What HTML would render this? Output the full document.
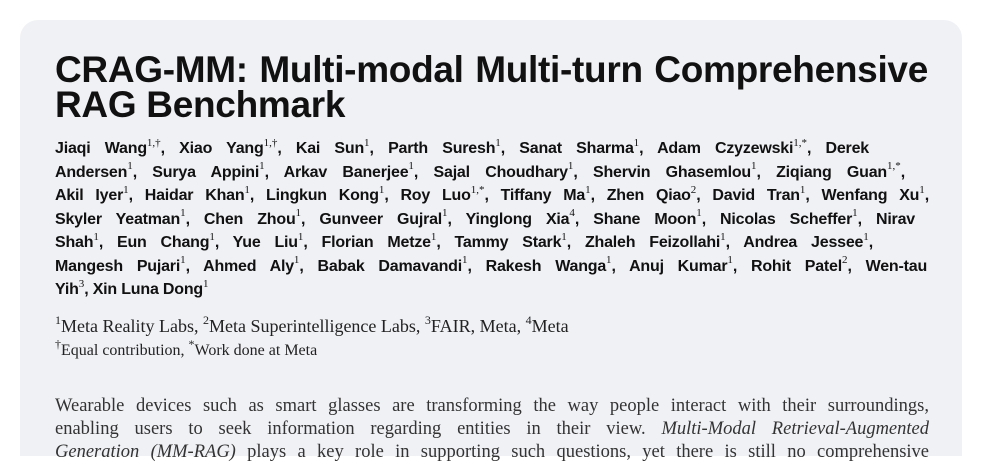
<!DOCTYPE html>
<html><head><meta charset="utf-8"><style>
html,body{margin:0;padding:0;background:#fff;width:982px;height:456px;overflow:hidden}
.card{position:absolute;left:20px;top:20px;width:942px;height:436px;background:#f0f1f5;border-radius:18px 18px 0 0}
.in{position:absolute;left:35px;top:0}
.t{font-family:"Liberation Sans",sans-serif;font-weight:bold;color:#111;font-size:37px;letter-spacing:-0.3px;line-height:35px;white-space:nowrap}
.j{display:block;text-align:justify;text-align-last:justify;white-space:nowrap}
.a{font-family:"Liberation Sans",sans-serif;font-weight:bold;color:#111;font-size:16px;letter-spacing:-0.2px;line-height:23.5px;position:absolute;left:0;top:117px}
.a sup,.f sup{display:inline-block;font-family:"Liberation Serif",serif;font-weight:normal;font-size:11px;line-height:0;position:relative;top:-1px;letter-spacing:0}
.f{font-family:"Liberation Serif",serif;color:#222;position:absolute;left:0;white-space:nowrap}
.f sup{font-size:12px}
.ab{font-family:"Liberation Serif",serif;color:#333;font-size:18.5px;line-height:23px;position:absolute;left:0;top:375px;width:874px}
</style></head><body>
<div class="card"><div class="in">
<div class="t" style="position:absolute;top:32px;"><span class="j" style="width:873px">CRAG-MM: Multi-modal Multi-turn Comprehensive</span><span>RAG Benchmark</span></div>
<div class="a">
<span class="j" style="width:814px">Jiaqi Wang<sup>1,†</sup>, Xiao Yang<sup>1,†</sup>, Kai Sun<sup>1</sup>, Parth Suresh<sup>1</sup>, Sanat Sharma<sup>1</sup>, Adam Czyzewski<sup>1,*</sup>, Derek</span>
<span class="j" style="width:850px">Andersen<sup>1</sup>, Surya Appini<sup>1</sup>, Arkav Banerjee<sup>1</sup>, Sajal Choudhary<sup>1</sup>, Shervin Ghasemlou<sup>1</sup>, Ziqiang Guan<sup>1,*</sup>,</span>
<span class="j" style="width:874px">Akil Iyer<sup>1</sup>, Haidar Khan<sup>1</sup>, Lingkun Kong<sup>1</sup>, Roy Luo<sup>1,*</sup>, Tiffany Ma<sup>1</sup>, Zhen Qiao<sup>2</sup>, David Tran<sup>1</sup>, Wenfang Xu<sup>1</sup>,</span>
<span class="j" style="width:860px">Skyler Yeatman<sup>1</sup>, Chen Zhou<sup>1</sup>, Gunveer Gujral<sup>1</sup>, Yinglong Xia<sup>4</sup>, Shane Moon<sup>1</sup>, Nicolas Scheffer<sup>1</sup>, Nirav</span>
<span class="j" style="width:818px">Shah<sup>1</sup>, Eun Chang<sup>1</sup>, Yue Liu<sup>1</sup>, Florian Metze<sup>1</sup>, Tammy Stark<sup>1</sup>, Zhaleh Feizollahi<sup>1</sup>, Andrea Jessee<sup>1</sup>,</span>
<span class="j" style="width:872px">Mangesh Pujari<sup>1</sup>, Ahmed Aly<sup>1</sup>, Babak Damavandi<sup>1</sup>, Rakesh Wanga<sup>1</sup>, Anuj Kumar<sup>1</sup>, Rohit Patel<sup>2</sup>, Wen-tau</span>
<span style="display:block;white-space:nowrap">Yih<sup>3</sup>, Xin Luna Dong<sup>1</sup></span>
</div>
<div class="f" style="top:295px;font-size:18px;line-height:22px"><sup>1</sup>Meta Reality Labs, <sup>2</sup>Meta Superintelligence Labs, <sup>3</sup>FAIR, Meta, <sup>4</sup>Meta</div>
<div class="f" style="top:320px;font-size:16px;line-height:22px"><sup>†</sup>Equal contribution, <sup>*</sup>Work done at Meta</div>
<div class="ab">
<span class="j" style="width:874px">Wearable devices such as smart glasses are transforming the way people interact with their surroundings,</span>
<span class="j" style="width:874px">enabling users to seek information regarding entities in their view. <i>Multi-Modal Retrieval-Augmented</i></span>
<span class="j" style="width:874px"><i>Generation (MM-RAG)</i> plays a key role in supporting such questions, yet there is still no comprehensive</span>
</div>
</div></div>
</body></html>
